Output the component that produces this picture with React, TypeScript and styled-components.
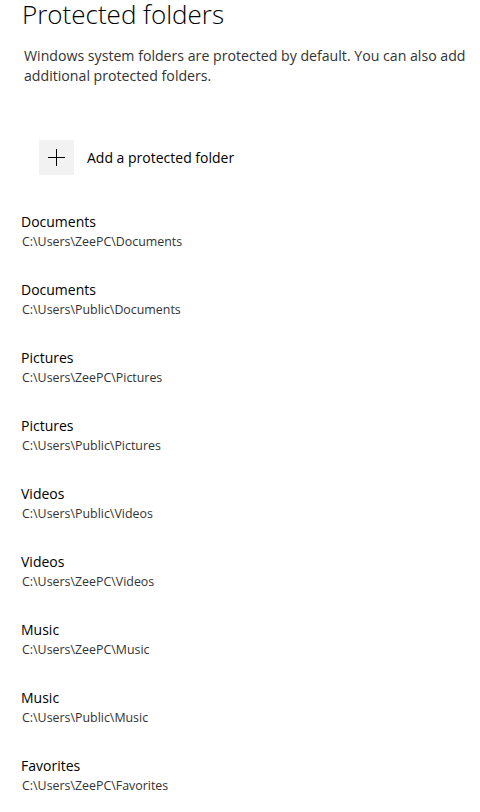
import React from "react";
import styled, { createGlobalStyle } from "styled-components";

const Global = createGlobalStyle`
  html, body { margin: 0; padding: 0; background: #ffffff; }
  body { font-family: "Open Sans", "Noto Sans", sans-serif; color: #000; }
`;

const Page = styled.div`
  width: 480px;
  height: 812px;
  overflow: hidden;
  padding-left: 21px;
  box-sizing: border-box;
`;

const Title = styled.h1`
  margin: 0 0 0 1px;
  font-size: 26px;
  font-weight: 300;
  line-height: 28px;
  color: #000;
`;

const Description = styled.p`
  margin: 18px 0 0 3px;
  font-size: 14.15px;
  line-height: 20px;
  color: #333;
  width: 450px;
`;

const AddButton = styled.div`
  display: flex;
  align-items: center;
  gap: 13px;
  margin: 54px 0 0 18px;
`;

const PlusBox = styled.div`
  width: 35px;
  height: 35px;
  background: #f2f2f2;
  display: flex;
  align-items: center;
  justify-content: center;
`;

const AddLabel = styled.span`
  font-size: 14px;
  line-height: 20px;
  color: #000;
`;

const List = styled.div`
  display: flex;
  flex-direction: column;
  gap: 28px;
  margin-top: 37px;
`;

const Row = styled.div`
  display: flex;
  flex-direction: column;
  height: 40px;
`;

const RowTitle = styled.div`
  font-size: 14px;
  line-height: 20px;
  color: #000;
`;

const RowPath = styled.div`
  font-size: 12.4px;
  line-height: 20px;
  color: #333;
  margin-left: 1px;
`;

const folders: [string, string][] = [
  ["Documents", "C:\\Users\\ZeePC\\Documents"],
  ["Documents", "C:\\Users\\Public\\Documents"],
  ["Pictures", "C:\\Users\\ZeePC\\Pictures"],
  ["Pictures", "C:\\Users\\Public\\Pictures"],
  ["Videos", "C:\\Users\\Public\\Videos"],
  ["Videos", "C:\\Users\\ZeePC\\Videos"],
  ["Music", "C:\\Users\\ZeePC\\Music"],
  ["Music", "C:\\Users\\Public\\Music"],
  ["Favorites", "C:\\Users\\ZeePC\\Favorites"],
];

export default function App() {
  return (
    <Page>
      <Global />
      <Title>Protected folders</Title>
      <Description>
        Windows system folders are protected by default. You can also add additional protected folders.
      </Description>
      <AddButton>
        <PlusBox>
          <svg width="17" height="17" viewBox="0 0 17 17">
            <path d="M8.5 0V17M0 8.5H17" stroke="#000" strokeWidth="1" fill="none" />
          </svg>
        </PlusBox>
        <AddLabel>Add a protected folder</AddLabel>
      </AddButton>
      <List>
        {folders.map(([name, path], i) => (
          <Row key={i}>
            <RowTitle>{name}</RowTitle>
            <RowPath>{path}</RowPath>
          </Row>
        ))}
      </List>
    </Page>
  );
}
